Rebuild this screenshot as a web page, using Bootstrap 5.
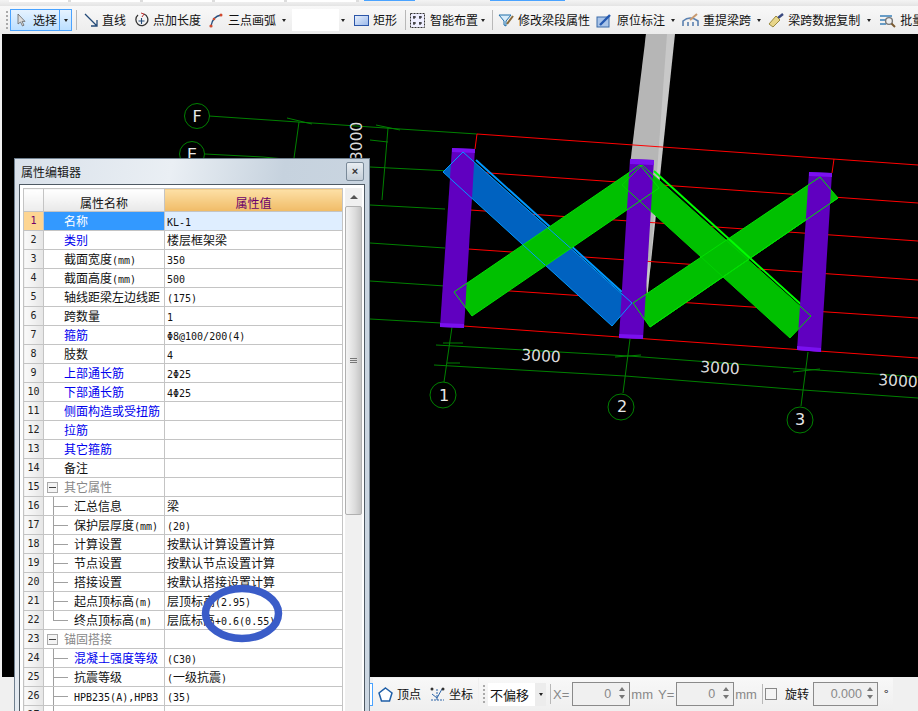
<!DOCTYPE html>
<html lang="zh-CN">
<head>
<meta charset="utf-8">
<title>属性编辑器</title>
<link href="https://cdn.jsdelivr.net/npm/bootstrap@5.3.0/dist/css/bootstrap.min.css" rel="stylesheet">
<style>
html,body{height:711px;width:918px;overflow:hidden}
body{font:12px/16px "Noto Sans CJK SC","Liberation Sans",sans-serif;color:#111;background:#f0f0f0}
.topstrip{height:6px;background:linear-gradient(#f4f4f4,#e4e4e4)}
.tf{height:2px;background:#fff;border-right:3px solid #ddd}
.tf-blue{height:1px;border:1px solid #4aa3ff;border-top:0;background:#fff}
.tbar{height:28px;background:linear-gradient(#f8f8f8,#ececec);white-space:nowrap;overflow:hidden}
.tbar>*,.bbar>*,.bgroup>*{flex:none}
.grip{width:2px;height:18px;background:repeating-linear-gradient(#aaa 0 2px,transparent 2px 4px)}
.sep{width:1px;height:20px;background:#b8b8b8}
.sel{height:22px;border:1px solid #4aa3ff;background:linear-gradient(#e6f3ff,#bcdfff);width:50px}
.sel2{height:22px;width:12px;border:1px solid #4aa3ff;border-left:0;background:linear-gradient(#e6f3ff,#bcdfff)}
.tri{width:0;height:0;border:solid transparent;border-width:3px 2.5px 0;border-top-color:#222;flex:none}
.whitebox{width:47px;height:22px;background:#fff}
.ml1{margin-left:1px}.ml2{margin-left:2px}.ml3{margin-left:3px}.ml4{margin-left:4px}.ml5{margin-left:5px}.ml6{margin-left:6px}.ml7{margin-left:7px}.ml8{margin-left:8px}.ml9{margin-left:9px}
.canvas{height:643px;background:#000;margin-left:2px}
.canvas svg{display:block}
.cadt{font-family:"DejaVu Sans",sans-serif;font-size:15.5px;fill:#dcdcdc}
.cadn{font-family:"DejaVu Sans",sans-serif;font-size:16px;fill:#e8e8e8;text-anchor:middle}
.bbar{height:34px;background:#f0f0f0;white-space:nowrap;overflow:hidden}
.bspacer{width:370px;height:100%}
.bblue{width:3px;height:23px;border:1px solid #4aa3ff;border-left:0;background:#fff}
.bgroup{height:32px;background:linear-gradient(#f8f8f8,#efefef)}
.bcombo{width:47px;height:23px;background:#fff;padding-left:2px;line-height:23px;font-size:13px}
.bdrop{width:11px;height:23px;background:#ececec}
.spin{height:24px;border:1px solid #8a8a8a;background:#f0f0f0;color:#888;font:12.5px/22px "Liberation Sans",sans-serif;text-align:right}
.spin58{width:58px}
.spin65{width:65px}
.spinv{padding-right:4px}
.spin65 .spinv{padding-right:1px}
.arrs{width:14px;flex:none}
.up{border:solid transparent;border-width:0 3px 4px;border-bottom-color:#777;width:0;height:0;display:block;margin:4px auto 4px}
.dn{border:solid transparent;border-width:4px 3px 0;border-top-color:#777;width:0;height:0;display:block;margin:auto}
.gtxt{color:#888;font:13px "Liberation Sans",sans-serif}
.cb{width:12px;height:12px;border:1px solid #888;background:#f4f4f4}
.pwin{position:absolute;left:14px;top:158px;width:356px;height:553px;overflow:hidden;border:1px solid #70808f;border-bottom:0;background:linear-gradient(100deg,#d9e1ea,#eaeff4 35%,#c6d2de 60%,#cdd8e3);padding:0 4px}
.ptitle{height:25px;padding-left:2px}
.ptitle span.tt{color:#1a1a1a;font-size:12px}
.pclose{width:18px;height:19px;border:1px solid #7a8a99;border-radius:2px;background:linear-gradient(#e8edf2,#c4ced8);color:#333;font:bold 11px/17px "Liberation Sans",sans-serif;text-align:center;margin-right:1px}
.pframe{border:1px solid #4f5a64;background:#fff;padding:3px 3px 0;height:600px}
.ptab{width:319px;table-layout:fixed;border-collapse:collapse;margin:0;flex:none;align-self:flex-start;font-size:12px}
.ptab th,.ptab td{border:1px solid #c4c4c4;padding:0;height:19px;line-height:17px;white-space:nowrap;overflow:hidden;font-weight:400;background:#fff;color:#111;box-shadow:none}
.ptab thead th{height:23px;text-align:center}
.ptab .c0{width:20px}.ptab .c1{width:121px}.ptab .c2{width:178px}
.ptab .hd0{background:linear-gradient(#fff,#ececec)}
.ptab .hd1{background:linear-gradient(#fff,#e8e8e8)}
.ptab .hd2{background:linear-gradient(#fde0a6,#f0bb66);color:#6a006a}
.ptab td.no{text-align:center;background:linear-gradient(90deg,#fafafa,#e6e6e6);font:10px/17px "DejaVu Sans Mono",monospace;color:#222}
.ptab td.nm{padding-left:20px}
.ptab td.val{padding-left:2px}
.ptab td.lk{color:#0000ee}
.ptab tr.on td.no{background:#fdd592;color:#70006a}
.ptab tr.on td.nm{background:#3399ff;color:#fff}
.ptab tr.on td.val{background:#dfeeff}
.ptab td.tr1,.ptab td.tr2{padding-left:30px;background-image:linear-gradient(#a0a0a0,#a0a0a0),linear-gradient(#a0a0a0,#a0a0a0);background-repeat:no-repeat;background-position:9px 9px,9px 0;background-size:15px 1px,1px 100%}
.ptab td.tr2{background-size:15px 1px,1px 10px}
.ptab td.gp{padding-left:3px;color:#888}
.minus{display:inline-block;width:11px;height:11px;border:1px solid #aaa;margin-right:6px;vertical-align:-1px;background:linear-gradient(#444,#444) center/7px 1px no-repeat #f4f4f4}
.lt{font-family:"DejaVu Sans Mono",monospace;font-size:10px;line-height:1}
.psb{width:17px;margin-left:2px;background:#f0f0f0;flex:none}
.psb-up{height:18px}
.psb-tri{width:0;height:0;border:solid transparent;border-width:0 4px 4px;border-bottom-color:#555}
.psb-th{height:309px;border:1px solid #b0b0b0;border-radius:2px;background:linear-gradient(90deg,#f4f4f4,#dcdcdc 60%,#c4c4c4)}
.psb-g{width:7px;height:6px;background:repeating-linear-gradient(#777 0 1px,transparent 1px 2px)}
.anno{position:absolute;left:0;top:0;pointer-events:none}
</style>
</head>
<body class="position-relative">
<div class="topstrip d-flex">
  <div class="tf ml9" style="width:62px"></div><div class="tf" style="width:72px"></div><div class="tf" style="width:72px"></div><div class="tf" style="width:72px"></div><div class="tf" style="width:72px"></div>
  <div class="tf-blue ml5" style="width:51px"></div>
  <div class="tf-blue" style="width:75px;margin-left:75px"></div>
</div>
<div class="tbar d-flex align-items-center">
  <div class="grip ml6"></div>
  <div class="sel d-flex align-items-center ml2">
    <svg class="ml6" width="9" height="14" viewBox="0 0 9 14"><path d="M1 1v10l2.500-2 2 4 1.500-.8-2-3.800H8z" fill="#ddd" stroke="#666" stroke-width=".8"/></svg>
    <span class="ml7">选择</span>
  </div>
  <div class="sel2 d-flex align-items-center justify-content-center"><i class="tri"></i></div>
  <div class="sep ml4"></div>
  <svg class="ml7" width="14" height="14" viewBox="0 0 14 14"><path d="M1 1l12 12M13 7v6H7" fill="none" stroke="#234a78" stroke-width="1.3"/></svg>
  <span class="ml4">直线</span>
  <svg class="ml8" width="15" height="16" viewBox="0 0 15 16"><path d="M4 3a6 6 0 1 0 6-1" fill="none" stroke="#333" stroke-width="1.3"/><path d="M7 1l3 1-2 3" fill="none" stroke="#b33" stroke-width="1"/><path d="M7.500 6v6M4.500 9h6" stroke="#234a78" stroke-width="1.1"/></svg>
  <span class="ml4">点加长度</span>
  <svg class="ml8" width="14" height="15" viewBox="0 0 14 15"><path d="M2 13C3 7 6 3 12 2" fill="none" stroke="#25507f" stroke-width="1.3"/><circle cx="2" cy="13" r="1.600" fill="#d04a30"/><circle cx="5" cy="6" r="1.300" fill="#d04a30"/><circle cx="12" cy="2" r="1.500" fill="#d04a30"/></svg>
  <span class="ml5">三点画弧</span>
  <i class="tri ml6"></i>
  <div class="whitebox ml6"></div>
  <i class="tri ml2"></i>
  <svg class="ml9" width="15" height="11" viewBox="0 0 15 11"><defs><linearGradient id="rg" x2="1" y2="1"><stop offset="0" stop-color="#e8f0fc"/><stop offset="1" stop-color="#9ab8ea"/></linearGradient></defs><rect x=".5" y=".5" width="14" height="10" fill="url(#rg)" stroke="#2c56a8"/></svg>
  <span class="ml4">矩形</span>
  <div class="sep ml8"></div>
  <svg class="ml4" width="15" height="15" viewBox="0 0 15 15"><rect x=".5" y=".5" width="14" height="14" fill="#eef" stroke="#333" stroke-dasharray="2 1"/><path d="M4 3v3M3 4h3M10 3v3M9 4h3M4 9v3M3 10h3M10 9v3M9 10h3" stroke="#111"/></svg>
  <span class="ml5">智能布置</span>
  <i class="tri ml3"></i>
  <div class="sep ml7"></div>
  <svg class="ml5" width="17" height="15" viewBox="0 0 17 15"><path d="M1 2h12L8 8v5L6 12V8z" fill="#d8ecfa" stroke="#1f6ea8"/><path d="M9 11l6-8" stroke="#8a6a3a" stroke-width="2"/></svg>
  <span class="ml3">修改梁段属性</span>
  <svg class="ml6" width="16" height="15" viewBox="0 0 16 15"><rect x="1" y="4" width="12" height="10" fill="#a9c4e8" stroke="#3a6aa8"/><path d="M4 12l10-10" stroke="#2458b0" stroke-width="2.400"/></svg>
  <span class="ml5">原位标注</span>
  <i class="tri ml6"></i>
  <svg class="ml7" width="17" height="14" viewBox="0 0 17 14"><path d="M1 13V8q7-6 15 0v5M6 13V9M11 13V9" fill="none" stroke="#5a80b0" stroke-width="1.600"/><path d="M8 7l7-6" stroke="#c89a70" stroke-width="2"/></svg>
  <span class="ml4">重提梁跨</span>
  <i class="tri ml6"></i>
  <svg class="ml7" width="17" height="15" viewBox="0 0 17 15"><path d="M10 5l5-4" stroke="#3a4a80" stroke-width="2.400"/><path d="M1 11l7-8 4 4-7 7z" fill="#e8d68a" stroke="#9a8a40"/></svg>
  <span class="ml3">梁跨数据复制</span>
  <i class="tri ml7"></i>
  <svg class="ml8" width="17" height="16" viewBox="0 0 17 16"><path d="M1 4h12M1 8h6M1 12h6" stroke="#3a80b8" stroke-width="1.500"/><circle cx="10" cy="9" r="3.400" fill="#eee" stroke="#777" stroke-width="1.400"/><path d="M12.500 11.500l3.500 3.500" stroke="#7a5a30" stroke-width="2"/></svg>
  <span class="ml4">批量</span>
</div>

<div class="canvas">
<svg width="916" height="643" viewBox="2 34 916 643" xmlns="http://www.w3.org/2000/svg">
  <polygon points="646,34 675,34 647,300 640,165" fill="#c8c8c8"/>
  <polygon points="646,34 667,34 650,270 630,165" fill="#b6b6b6"/>
  <g stroke="#008000" stroke-width="1" fill="none">
    <polyline points="209,116 298,122 400,129 477,134"/>
    <polyline points="205,154 263,157 370,167 450,171"/>
    <polyline points="370,205 445,209"/><polyline points="370,243 445,248"/>
    <polyline points="370,281 445,286"/><polyline points="370,319 441,323"/>
    <polyline points="299,122 294,158"/><polyline points="388,128 382,200"/>
    <polyline points="287,118 312,124"/><polyline points="376,125 400,130"/>
    <polyline points="370,140 388,142"/>
    <polyline points="436,345 629,356 817,370 918,377"/>
    <polyline points="434,365 625,376 803,390 918,398"/>
    <polyline points="452,327 444,382"/><polyline points="630,339 623,393"/><polyline points="808,352 801,406"/>
    <polyline points="443,343 463,343"/><polyline points="615,357 641,355"/><polyline points="793,372 820,369"/><polyline points="447,363 460,363"/>
    <circle cx="197" cy="116" r="12.500"/><circle cx="192" cy="154" r="12.500"/>
    <circle cx="443" cy="395" r="13"/><circle cx="621" cy="407" r="13"/><circle cx="800" cy="420" r="13"/>
  </g>
  <g stroke="#ff0000" stroke-width="1" fill="none">
    <polyline points="475,149 477,134 918,165"/>
    <polyline points="832,173 834,159"/>
    <polyline points="475,172 918,203"/>
    <polyline points="470,210 918,241"/>
    <polyline points="468,249 918,280"/>
    <polyline points="465,288 918,318"/>
    <polyline points="463,326 918,358"/>
  </g>
  <polygon points="443,172 463,152 632,303 612,326" fill="#0062c0"/>
  <polyline points="476,160 622,292" stroke="#0099ff" stroke-width="2" fill="none"/>
  <polygon points="454,292 472,316 659,188 640,165" fill="#00c000"/>
  <polygon points="622,185 642,165 811,316 790,338" fill="#00c000"/>
  <polygon points="633,303 650,327 838,198 820,177" fill="#00c000"/>
  <polyline points="654,171 805,308" stroke="#00ff00" stroke-width="2" fill="none"/>
  <polyline points="650,327 838,198" stroke="#00ee00" stroke-width="1" fill="none"/>
  <polygon points="452,148 475,149 464,328 440,327" fill="#6000c0"/>
  <polygon points="630,159 654,160 643,339 619,338" fill="#6000c0"/>
  <polygon points="809,172 832,173 821,352 797,350" fill="#6000c0"/>
  <polygon points="452,148 475,149 475,153 452,152" fill="#7a10f0"/>
  <polygon points="630,159 654,160 654,165 630,164" fill="#7a10f0"/>
  <polygon points="809,172 832,173 832,177 809,176" fill="#7a10f0"/>
  <polygon points="440,323 464,324 464,328 440,327" fill="#7a10f0"/>
  <polygon points="619,334 643,335 643,339 619,338" fill="#7a10f0"/>
  <polygon points="797,346 821,348 821,352 797,350" fill="#7a10f0"/>
  <g fill="none" stroke-width="1">
    <polygon points="443,172 463,152 632,303 612,326" stroke="#0099ff"/>
    <polygon points="454,292 472,316 659,188 640,165" stroke="#00e000"/>
    <polygon points="622,185 642,165 811,316 790,338" stroke="#00d000"/>
    <polygon points="633,303 650,327 838,198 820,177" stroke="#00e000"/>
  </g>
  <text class="cadn" x="197" y="121.500">F</text>
  <text class="cadn" x="192" y="159.500">E</text>
  <text class="cadn" x="444" y="401">1</text>
  <text class="cadn" x="622" y="412">2</text>
  <text class="cadn" x="800" y="425">3</text>
  <text class="cadt" x="521" y="360" transform="rotate(3.500 521 360)">3000</text>
  <text class="cadt" x="700" y="372" transform="rotate(3.500 700 372)">3000</text>
  <text class="cadt" x="878" y="385" transform="rotate(3.500 878 385)">3000</text>
  <text class="cadt" x="362" y="161" transform="rotate(-90 362 161)">3000</text>
</svg>
</div>

<div class="bbar d-flex align-items-center">
  <div class="bspacer"></div>
  <div class="bblue"></div>
  <div class="bgroup d-flex align-items-center">
    <svg class="ml5" width="15" height="15" viewBox="0 0 15 15"><polygon points="7.500,1 14,6 11.500,14 3.500,14 1,6" fill="#fff" stroke="#1f5fa8" stroke-width="1.500"/></svg>
    <span class="ml4">顶点</span>
    <svg class="ml8" width="17" height="17" viewBox="0 0 17 17"><path d="M2 14h13M8 14V3" stroke="#2c64a8" stroke-dasharray="2 1"/><path d="M3 8l5 4 5-9" fill="none" stroke="#2c64a8"/><circle cx="14" cy="3" r="1.500" fill="#333"/><circle cx="3" cy="3" r="1.500" fill="#333"/></svg>
    <span class="ml3">坐标</span>
    <div class="ml5"></div>
  </div>
  <div class="bgroup d-flex align-items-center ml1">
    <div class="grip ml4"></div>
    <div class="bcombo ml3">不偏移</div>
    <div class="bdrop d-flex align-items-center justify-content-center"><i class="tri"></i></div>
    <div class="sep ml4"></div>
    <span class="gtxt ml2">X=</span>
    <div class="spin spin58 d-flex ml3"><div class="spinv flex-grow-1">0</div><div class="arrs"><i class="up"></i><i class="dn"></i></div></div>
    <span class="gtxt ml1">mm</span>
    <span class="gtxt ml5">Y=</span>
    <div class="spin spin58 d-flex ml2"><div class="spinv flex-grow-1">0</div><div class="arrs"><i class="up"></i><i class="dn"></i></div></div>
    <span class="gtxt ml1">mm</span>
    <div class="sep ml5"></div>
    <div class="cb ml2"></div>
    <span class="ml8">旋转</span>
    <div class="spin spin65 d-flex ml4"><div class="spinv flex-grow-1">0.000</div><div class="arrs"><i class="up"></i><i class="dn"></i></div></div>
    <span class="ml6">°</span>
    <div class="ml5"></div>
  </div>
</div>

<div class="pwin">
  <div class="ptitle d-flex align-items-center justify-content-between">
    <span class="tt">属性编辑器</span>
    <div class="pclose">×</div>
  </div>
  <div class="pframe d-flex">
    <table class="table ptab">
      <thead><tr><th class="c0 hd0"></th><th class="c1 hd1">属性名称</th><th class="c2 hd2">属性值</th></tr></thead>
      <tbody>
        <tr class="on"><td class="no">1</td><td class="nm">名称</td><td class="val"><span class="lt">KL-1</span></td></tr>
        <tr><td class="no">2</td><td class="nm lk">类别</td><td class="val">楼层框架梁</td></tr>
        <tr><td class="no">3</td><td class="nm">截面宽度<span class="lt">(mm)</span></td><td class="val"><span class="lt">350</span></td></tr>
        <tr><td class="no">4</td><td class="nm">截面高度<span class="lt">(mm)</span></td><td class="val"><span class="lt">500</span></td></tr>
        <tr><td class="no">5</td><td class="nm">轴线距梁左边线距</td><td class="val"><span class="lt">(175)</span></td></tr>
        <tr><td class="no">6</td><td class="nm">跨数量</td><td class="val"><span class="lt">1</span></td></tr>
        <tr><td class="no">7</td><td class="nm lk">箍筋</td><td class="val"><span class="lt">Φ8@100/200(4)</span></td></tr>
        <tr><td class="no">8</td><td class="nm">肢数</td><td class="val"><span class="lt">4</span></td></tr>
        <tr><td class="no">9</td><td class="nm lk">上部通长筋</td><td class="val"><span class="lt">2Φ25</span></td></tr>
        <tr><td class="no">10</td><td class="nm lk">下部通长筋</td><td class="val"><span class="lt">4Φ25</span></td></tr>
        <tr><td class="no">11</td><td class="nm lk">侧面构造或受扭筋</td><td class="val"></td></tr>
        <tr><td class="no">12</td><td class="nm lk">拉筋</td><td class="val"></td></tr>
        <tr><td class="no">13</td><td class="nm lk">其它箍筋</td><td class="val"></td></tr>
        <tr><td class="no">14</td><td class="nm">备注</td><td class="val"></td></tr>
        <tr><td class="no">15</td><td class="gp"><i class="minus"></i>其它属性</td><td class="val"></td></tr>
        <tr><td class="no">16</td><td class="tr1">汇总信息</td><td class="val">梁</td></tr>
        <tr><td class="no">17</td><td class="tr1">保护层厚度<span class="lt">(mm)</span></td><td class="val"><span class="lt">(20)</span></td></tr>
        <tr><td class="no">18</td><td class="tr1">计算设置</td><td class="val">按默认计算设置计算</td></tr>
        <tr><td class="no">19</td><td class="tr1">节点设置</td><td class="val">按默认节点设置计算</td></tr>
        <tr><td class="no">20</td><td class="tr1">搭接设置</td><td class="val">按默认搭接设置计算</td></tr>
        <tr><td class="no">21</td><td class="tr1">起点顶标高<span class="lt">(m)</span></td><td class="val">层顶标高<span class="lt">(2.95)</span></td></tr>
        <tr><td class="no">22</td><td class="tr2">终点顶标高<span class="lt">(m)</span></td><td class="val">层底标高<span class="lt">+0.6(0.55)</span></td></tr>
        <tr><td class="no">23</td><td class="gp"><i class="minus"></i>锚固搭接</td><td class="val"></td></tr>
        <tr><td class="no">24</td><td class="tr1 lk">混凝土强度等级</td><td class="val"><span class="lt">(C30)</span></td></tr>
        <tr><td class="no">25</td><td class="tr1">抗震等级</td><td class="val"><span class="lt">(</span>一级抗震<span class="lt">)</span></td></tr>
        <tr><td class="no">26</td><td class="tr1"><span class="lt">HPB235(A),HPB3</span></td><td class="val"><span class="lt">(35)</span></td></tr>
        <tr><td class="no">27</td><td class="tr1"><span class="lt">HRB335(B),HRB3</span></td><td class="val"><span class="lt">(34/37)</span></td></tr>
      </tbody>
    </table>
    <div class="psb">
      <div class="psb-up d-flex align-items-center justify-content-center"><i class="psb-tri"></i></div>
      <div class="psb-th d-flex align-items-center justify-content-center"><i class="psb-g"></i></div>
    </div>
  </div>
</div>

<svg class="anno" width="918" height="711" viewBox="0 0 918 711" xmlns="http://www.w3.org/2000/svg">
  <ellipse cx="242" cy="613.500" rx="36.500" ry="25" fill="none" stroke="#3a5cc8" stroke-width="7.500"/>
</svg>

<script src="https://cdn.jsdelivr.net/npm/bootstrap@5.3.0/dist/js/bootstrap.bundle.min.js"></script>
</body>
</html>
